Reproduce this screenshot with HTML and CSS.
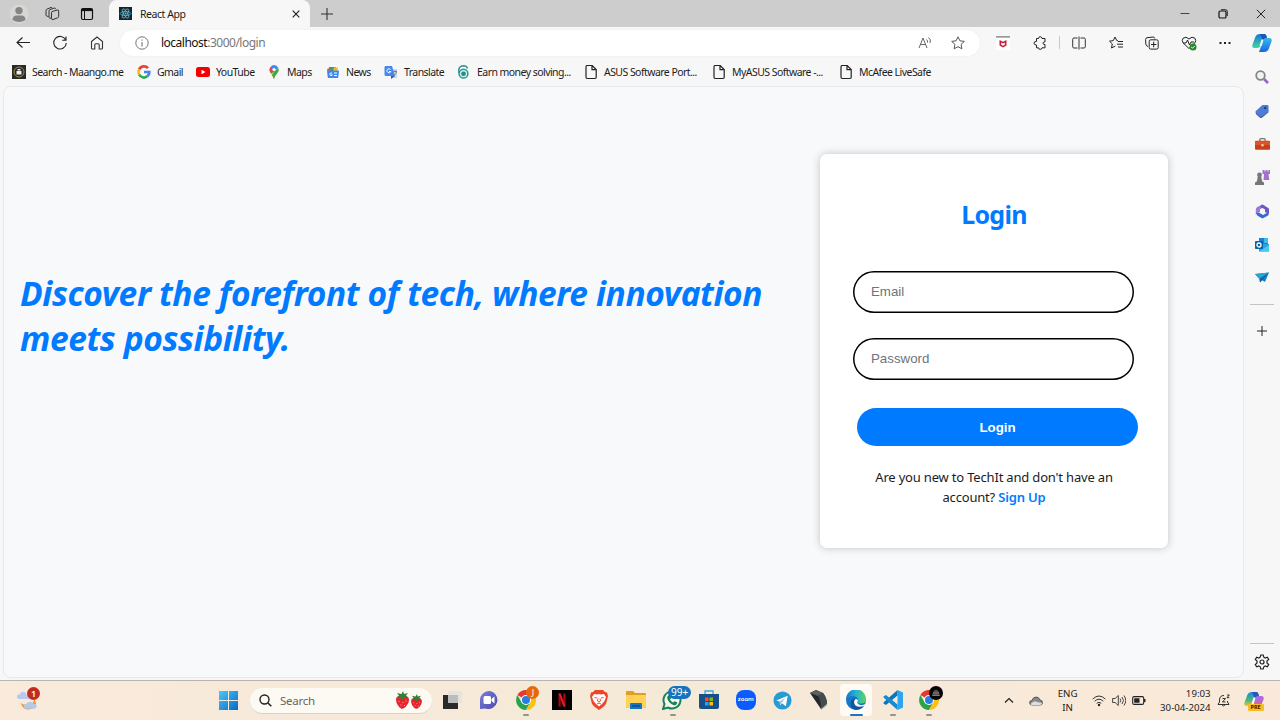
FILE: index.html
```html
<!DOCTYPE html>
<html lang="en">
<head>
<meta charset="utf-8">
<title>React App</title>
<link rel="stylesheet" href="styles.css">
</head>
<body>
<svg width="0" height="0" class="defs">
  <defs>
    <linearGradient id="win" x1="0" y1="0" x2="1" y2="1"><stop offset="0" stop-color="#4cc8f4"/><stop offset="1" stop-color="#0669c8"/></linearGradient>
    <linearGradient id="edge" x1="0" y1="0" x2="1" y2="0"><stop offset="0" stop-color="#1676c8"/><stop offset=".5" stop-color="#22b5d6"/><stop offset="1" stop-color="#63d453"/></linearGradient>
    <linearGradient id="cop1" x1="0" y1="0" x2="0" y2="1"><stop offset="0" stop-color="#1478d4"/><stop offset="1" stop-color="#43d6a0"/></linearGradient>
    <linearGradient id="cop2" x1="0" y1="0" x2="0" y2="1"><stop offset="0" stop-color="#35b9ee"/><stop offset="1" stop-color="#1668e0"/></linearGradient>
    <linearGradient id="pre1" x1="0" y1="0" x2="0" y2="1"><stop offset="0" stop-color="#1988e0"/><stop offset=".6" stop-color="#50b77a"/><stop offset="1" stop-color="#f2c72b"/></linearGradient>
    <linearGradient id="pre2" x1="0" y1="0" x2="0" y2="1"><stop offset="0" stop-color="#a66be8"/><stop offset="1" stop-color="#f0618b"/></linearGradient>
    <linearGradient id="violet" x1="0" y1="0" x2="1" y2="1"><stop offset="0" stop-color="#7a7edc"/><stop offset="1" stop-color="#4a4aae"/></linearGradient>
    <symbol id="file" viewBox="0 0 14 16"><path d="M2.2 1.500h6l4 4v7.800q0 1.200-1.200 1.200H3.200Q2 14.500 2 13.300V2.700q0-1.200 1.200-1.200M8 1.700v4h4" fill="none" stroke="#222" stroke-width="1.200"/></symbol>
    <symbol id="chrome" viewBox="0 0 20 20"><path d="M10 10 1.400 5A10 10 0 0 1 18.700 5H10z" fill="#e23a2e"/><path d="M10 10 5.700 12.500 1.400 5A10 10 0 0 0 10 20l4.300-7.500z" fill="#2ba24c"/><path d="M10 5h8.700A10 10 0 0 1 10 20l4.300-7.500z" fill="#fbc116"/><circle cx="10" cy="10" r="5" fill="#fff"/><circle cx="10" cy="10" r="4" fill="#2a7de1"/></symbol>
    <symbol id="berry" viewBox="0 0 15 18"><path d="M1 8Q2 4.500 7 4.500T14 8q.5 4-3 7.500-3 3-5 2Q1 14 1 8z" fill="#e5252f"/><path d="M8 0 6.500 3 2 2l2 2.500L1 7l4-.5 2 3 2-3 5 .5-3-2.500L13 2 9 3z" fill="#3a7b35"/><path d="M4 10v1M8 11v1M6 13.500v1M11 9.500v1M9.500 14v1" stroke="#ffb08f"/></symbol>
  </defs>
</svg>
<div class="screen">
  <header class="titlebar">
    <div class="window-tools">
      <svg class="avatar" viewBox="0 0 20 20"><circle cx="10" cy="10" r="9.500" fill="#d9d7d4"/><circle cx="10" cy="6.600" r="3.700" fill="#858585"/><path d="M3.500 16q0-4.500 4-4.500h5q4 0 4 4.500-6.500 4-13 0z" fill="#858585"/></svg>
      <svg class="i16" viewBox="0 0 16 16"><g fill="none" stroke="#333"><path d="M8 5.500 13.500 4q1.200-.2 1.200 1v5.500q0 1-1 1.300L9 13.500q-1.500.3-1.500-1V6.700q0-.9.500-1.200z"/><path d="M7 12.300 5.500 12Q5 12 5 11V5q0-1 1-1.400L10.500 2q1 0 1.500 1.200"/><path d="M4.500 10.500 2.500 10Q2 9.700 2 9V4.500q0-1 1-1.400L7 1.500q1-.2 1.500.8"/></g></svg>
      <svg class="i14" viewBox="0 0 14 14"><rect x="1.500" y="1.500" width="11" height="11" rx="1.500" fill="none" stroke="#111" stroke-width="1.200"/><path d="M1.500 3h11" stroke="#111" stroke-width="2.200"/><path d="M4.500 4v8" stroke="#111"/></svg>
    </div>
    <div class="tab">
      <svg class="i13" viewBox="0 0 13 13"><path d="M0 0h13v13H0z" fill="#17242d"/><g fill="none" stroke="#58bfd8" stroke-width=".8"><ellipse cx="6.500" cy="6.500" rx="5.300" ry="2"/><ellipse cx="6.500" cy="6.500" rx="5.300" ry="2" transform="rotate(60 6.500 6.500)"/><ellipse cx="6.500" cy="6.500" rx="5.300" ry="2" transform="rotate(120 6.500 6.500)"/></g><circle cx="6.500" cy="6.500" r="1" fill="#58bfd8"/></svg>
      <span class="tab-title">React App</span>
      <svg class="i8" viewBox="0 0 8 8"><path d="m.7.7 6.600 6.600m0-6.600L.7 7.300" stroke="#222" stroke-width="1.200"/></svg>
    </div>
    <svg class="new-tab" viewBox="0 0 12 12"><path d="M6 0v12M0 6h12" stroke="#333" stroke-width="1.100"/></svg>
    <div class="window-controls">
      <svg class="i10" viewBox="0 0 10 10"><path d="M.5 4.500h9" stroke="#444"/></svg>
      <svg class="i10" viewBox="0 0 10 10"><rect x="1" y="2" width="7" height="7" rx="1.300" fill="none" stroke="#111" stroke-width="1.200"/><path d="M3 .7h4.500q1.800 0 1.800 1.800V7" fill="none" stroke="#111" stroke-width=".9"/></svg>
      <svg class="i10" viewBox="0 0 10 10"><path d="m.8.8 8.400 8.400m0-8.400L.8 9.200" stroke="#222"/></svg>
    </div>
  </header>

  <nav class="toolbar">
    <div class="nav-buttons">
      <svg class="i16" viewBox="0 0 16 16"><path d="M15 7.500H2M7.500 2.500l-5.500 5 5.500 5" fill="none" stroke="#222" stroke-width="1.100"/></svg>
      <svg class="i16" viewBox="0 0 16 16"><path d="M13.700 5A6.300 6.300 0 1 0 14.300 8M14 1.500V5.200h-3.800" fill="none" stroke="#222" stroke-width="1.100"/></svg>
      <svg class="i16" viewBox="0 0 16 16"><path d="M2.500 6.500 8 2l5.500 4.500V13q0 1-1 1h-2.300V9.800q0-1-1-1H6.800q-1 0-1 1V14H3.500q-1 0-1-1z" fill="none" stroke="#333" stroke-width="1.100"/></svg>
    </div>
    <div class="address">
      <svg class="i14" viewBox="0 0 14 14"><circle cx="7" cy="7" r="6.200" fill="none" stroke="#666" stroke-width=".9"/><path d="M7 6v4.500M7 3.500v1.200" stroke="#666"/></svg>
      <span class="url"><b>localhost</b>:3000/login</span>
      <svg class="i14 read" viewBox="0 0 14 14"><path d="m1 12 4-10 4 10M2.500 8.500h5M8.500 3.500q1.500 1.200 1 3M10.500 1.500q3 2 1.500 5.500" fill="none" stroke="#666"/></svg>
      <svg class="i14" viewBox="0 0 14 14"><path d="m7 .8 1.900 4 4.400.6-3.200 3 .8 4.400L7 10.700l-3.900 2.100.8-4.400-3.200-3 4.400-.6z" fill="none" stroke="#555"/></svg>
    </div>
    <div class="extensions">
      <svg class="i14" viewBox="0 0 14 14"><path d="M0 1h14v13H0z" fill="#fff"/><path d="M0 0h14v1.700H0z" fill="#999"/><path d="M3.500 4 7 5.800 10.500 4v5.500L7 11.500 3.500 9.500z" fill="#c81f30"/><path d="M5.200 6.500 7 7.500l1.800-1V8.700L7 9.800 5.200 8.700z" fill="#fff"/></svg>
      <svg class="i14" viewBox="0 0 14 14"><path d="M3.500 2.500h2q0-1.800 1.700-1.800T9 2.500h3v3.300q-2 0-2 1.400t2 1.400v3.200H9q0 1.500-1.800 1.500T5.500 11.800h-2V9Q1 9 1 7.200t2.500-1.800z" fill="none" stroke="#222"/></svg>
    </div>
    <div class="actions">
      <svg class="i14" viewBox="0 0 14 14"><path d="M5.500 2H2Q.7 2 .7 3.300v7.400Q.7 12 2 12h3.500M8.500 2H12q1.300 0 1.300 1.300v7.400Q13.300 12 12 12H8.500M7 .5v13" fill="none" stroke="#333"/></svg>
      <svg class="i14" viewBox="0 0 14 14"><path d="M9 4.800 7.800 4.600 6 1 4.300 4.600.5 5.200l2.800 2.700L2.500 12l3.800-2M9 5.500h5M8 8.200h6M9 11h5" fill="none" stroke="#222"/></svg>
      <svg class="i14" viewBox="0 0 14 14"><path d="M3 10.500Q1 10 .8 8L.6 3.500Q.6 2 2 1.700L8 1q1.500 0 1.700 1.500" fill="none" stroke="#222"/><rect x="4.200" y="3.800" width="9" height="9.300" rx="1.500" fill="none" stroke="#222"/><path d="M8.700 5.700v5.600M6 8.500h5.400" stroke="#222"/></svg>
      <svg class="i16" viewBox="0 0 16 16"><path d="M8 13.500 2 7.800Q.5 5.500 2 3.300 5 .7 8 4q3-3.300 6-.7 1.500 2.200 0 4.500zM2 8h3l1.500-3 2 5L10 7h3" fill="none" stroke="#222"/><circle cx="12" cy="12" r="3.500" fill="#248a2a"/><path d="m10.200 12 1.300 1.200 2.300-2.300" fill="none" stroke="#fff"/></svg>
      <svg class="i14" viewBox="0 0 14 14"><path d="M1.500 6h2v2h-2zM6 6h2v2H6zM10.500 6h2v2h-2z" fill="#222"/></svg>
      <svg class="i20" viewBox="0 0 20 20"><path d="M8 1h5l-4 11Q8 15 5 15H3Q-.5 15 .5 11.500L3.300 4Q4.500 1 8 1z" fill="url(#cop1)"/><path d="M12 19H7l4-11Q12 5 15 5h2q3.500 0 2.500 3.500L16.700 16Q15.500 19 12 19z" fill="url(#cop2)"/><path d="M8 1h4.500q2 0 2.500 4-3 0-4 3z" fill="#1458b8"/><path d="M9.500 6.500h2L9.700 13H7.500z" fill="#e7fbff"/></svg>
    </div>
  </nav>

  <main class="browser-body">
    <div class="main-column">
      <div class="bookmarks">
        <div class="bm w125"><svg viewBox="0 0 14 14"><path d="M0 0h14v14H0z" fill="#292b2b"/><circle cx="7" cy="7" r="5" fill="none" stroke="#a7903b"/><path d="M4.500 6h5v3.500h-5zM5.500 4h3v1.500h-3z" fill="#eee"/></svg><span>Search - Maango.me</span></div>
        <div class="bm w59"><svg viewBox="0 0 14 14"><g fill="none" stroke-width="2.700"><path d="M2.200 4.500A5.300 5.300 0 0 1 11 3.200" stroke="#ea4335"/><path d="M2.200 4.500a5.300 5.300 0 0 0 0 5" stroke="#fbbc05"/><path d="M2.200 9.500a5.300 5.300 0 0 0 8.400 1.600" stroke="#34a853"/><path d="M7 7h5.300q0 2.500-1.700 4.100" stroke="#4285f4"/></g></svg><span>Gmail</span></div>
        <div class="bm w71"><svg viewBox="0 0 14 14"><rect y="2" width="14" height="10" rx="2.500" fill="#f40000"/><path d="m5.500 4.800 4 2.200-4 2.200z" fill="#fff"/></svg><span>YouTube</span></div>
        <div class="bm w59"><svg viewBox="0 0 14 14"><path d="M7 14Q6.500 11 4 8.500 2.500 7 2.500 4.500L7 4.500z" fill="#34a853"/><path d="M7 14q.5-3 3-5.500Q11.500 7 11.500 4.500L4 8.500Q6.500 11 7 14z" fill="#fbbc04"/><path d="M7 14q.5-3 3-5.500 2.500-3 1.200-5.700L7 7.500 5 10z" fill="#34a853"/><path d="M3.300 2.200Q5 0 7 0q3 0 4.200 2.800L7 7.500z" fill="#4285f4"/><path d="M2.500 4.500q0-1.500.8-2.300L7 5 4 8Q2.500 6 2.500 4.500z" fill="#ea4335"/><circle cx="7" cy="4.500" r="1.600" fill="#fff"/></svg><span>Maps</span></div>
        <div class="bm w58"><svg viewBox="0 0 14 14"><path d="M3 2h7v5H3z" fill="#32a564"/><path d="m8 2 4 1-1 4H7z" fill="#f6b62c"/><path d="m1 4 3-1 1 4H2z" fill="#e65145"/><path d="M1 5.500h12l-.7 6.500q0 1-1 1H2.700q-1 0-1-1z" fill="#3d85ef"/><path d="M6 8H4.500q-1.500 1 0 2.500H6V9M8 8h3M8 10.500h3" stroke="#fff" fill="none"/></svg><span>News</span></div>
        <div class="bm w73"><svg viewBox="0 0 14 14"><path d="M6 4h7v9H7z" fill="#cfd7e7"/><path d="M1.500 1H8l3 10H2q-1.500 0-1.500-1.500V2.500Q.5 1 1.500 1z" fill="#4687ef"/><path d="m7 14 4-3H7z" fill="#245bc0"/><path d="M6.500 4.500a2 2 0 1 0 .3 2H5" fill="none" stroke="#fff"/><path d="M9.500 6.500h3.500M11 5.500v1M12.500 7Q12 9 10.500 10" stroke="#667" fill="none" stroke-width=".8"/></svg><span>Translate</span></div>
        <div class="bm w127"><svg viewBox="0 0 14 14"><circle cx="6.500" cy="8.700" r="4.400" fill="#cfe9e6" stroke="#2b9993" stroke-width="1.500"/><path d="M1.800 8V4.500Q2.500 1 6.500.8q3.500.2 4 2.700" fill="none" stroke="#2b9993" stroke-width="1.500"/><circle cx="6.500" cy="8.700" r="2.300" fill="#218b87"/></svg><span>Earn money solving...</span></div>
        <div class="bm w128"><svg class="file"><use href="#file"/></svg><span>ASUS Software Port...</span></div>
        <div class="bm w127"><svg class="file"><use href="#file"/></svg><span>MyASUS Software -...</span></div>
        <div class="bm w127"><svg class="file"><use href="#file"/></svg><span>McAfee LiveSafe</span></div>
      </div>
      <section class="page">
        <h1 class="headline">Discover the forefront of tech, where innovation<br>meets possibility.</h1>
        <form class="card">
          <h2>Login</h2>
          <input type="email" placeholder="Email">
          <input type="password" placeholder="Password">
          <button type="button">Login</button>
          <p>Are you new to TechIt and don't have an<br>account? <a>Sign Up</a></p>
        </form>
      </section>
    </div>
    <aside class="sidebar">
      <div class="cell"><svg class="i14" viewBox="0 0 14 14"><circle cx="5.500" cy="5.500" r="4.300" fill="#eef4f5" stroke="#858585" stroke-width="1.800"/><path d="m9 9 4 4" stroke="#9467c5" stroke-width="2.600"/></svg></div>
      <div class="cell"><svg class="i14" viewBox="0 0 14 14"><path d="M7.500 1h4.700q1.300 0 1.300 1.300v4L7 12.700q-1 .8-2 0L.8 9q-.8-1 0-2z" fill="#4e7bd3"/><path d="m1 8.500 4 3.700q1 .8 2 0l6.500-6v2L7 13.700q-1 .6-2 0L.8 10z" fill="#3b61b5"/><circle cx="10.300" cy="4" r="1.200" fill="#164077"/></svg></div>
      <div class="cell"><svg class="i15" viewBox="0 0 14 14"><path d="M4.500 4V2.500q0-1 1-1h3q1 0 1 1V4" fill="none" stroke="#777" stroke-width="1.200"/><rect y="3.500" width="14" height="8.500" rx="1" fill="#c8401a"/><path d="M0 4h14v3.500H0z" fill="#df552a"/><path d="M6 6.700h2v2H6z" fill="#f5dfce"/></svg></div>
      <div class="cell"><svg class="i15" viewBox="0 0 15 15"><path d="M7.500 0h2v1.500h1V0h2v1.500h1V0H15v4h-1.500l.8 6H8.500L9 4H7.500z" fill="#a073ca"/><circle cx="4.500" cy="5" r="2.400" fill="#777"/><path d="M2.500 7h4v1.500l.8 3L9 12.500V15H0v-2.500l1.800-1 .7-3z" fill="#777"/></svg></div>
      <div class="cell"><svg class="i15" viewBox="0 0 15 15"><path d="M7 .5 2 3.300Q.8 4 .8 5.500v5L5 8V5.500L10.500 2z" fill="#9a7cd7"/><path d="m7 .5 5.500 3Q14 4.200 14 5.500V10l-4-2V5.500L5 3z" fill="#7055c6"/><path d="m.8 9 1.700 2.800L7.500 14.500l6-3.300V8L8 11 5 9z" fill="#386bd0"/><path d="m5 5.500 2.500-1.300L10 5.500V9l-2.500 1.300L5 9z" fill="#f7f7f7"/></svg></div>
      <div class="cell"><svg class="i14" viewBox="0 0 14 14"><path d="M4 0h9v9H4z" fill="#1683d6"/><path d="M9 0h4v5H9z" fill="#41b9ed"/><path d="M4 6h10v7.500H4z" fill="#28a3e0"/><path d="m4 13.500 10-6.500v6.500z" fill="#50c7ef"/><rect y="3" width="8" height="8" rx=".8" fill="#0763af"/><circle cx="4" cy="7" r="2" fill="none" stroke="#fff" stroke-width="1.300"/></svg></div>
      <div class="cell"><svg class="i14" viewBox="0 0 14 14"><path d="M0 3 14 1.500l-4 9.500-3.500-2L5 11.500 4 7.500z" fill="#1684c5"/><path d="M0 3 14 1.500l-10 6z" fill="#2ba3dc"/><path d="m14 1.500-9 10L5 8.500z" fill="#075e9e"/></svg></div>
      <hr>
      <svg class="side-plus" viewBox="0 0 10 10"><path d="M5 0v10M0 5h10" stroke="#222"/></svg>
      <hr class="bottom-line">
      <svg class="gear" viewBox="0 0 16 16"><path d="m6.800 1-.6 2.200-1.400.8-2.100-.7L1.300 5.500 3 7v2l-1.700 1.500 1.400 2.200 2.100-.7 1.400.8.6 2.200h2.400l.6-2.200 1.400-.8 2.100.7 1.400-2.200L13 9V7l1.700-1.500-1.400-2.200-2.100.7-1.400-.8L9.200 1z" fill="none" stroke="#222" stroke-width="1.200"/><circle cx="8" cy="8" r="2" fill="none" stroke="#222" stroke-width="1.200"/></svg>
    </aside>
  </main>

  <footer class="taskbar">
    <div class="weather"><svg viewBox="0 0 22 20"><path d="M18 7q0 6-5 7-5 1-9-2 2 7 8 7 6 0 8-6z" fill="#f2952f"/><path d="M3 8Q0 8 0 5.500T3 3q1-3 4.500-2.500Q10 1 10 4q3 0 3 2.500T11 8z" fill="#b8c8ef"/><path d="M10 18q-3 0-3-2.500t3-2.500q1-2.500 4-2.300T17.500 13q3 0 3 2.500T18 18z" fill="#b3c9e8"/></svg><span class="badge red">1</span></div>
    <svg class="start" viewBox="0 0 19 19"><path d="M0 0h9v9H0zM10 0h9v9h-9zM0 10h9v9H0zM10 10h9v9h-9z" fill="url(#win)"/></svg>
    <div class="search"><svg class="i13" viewBox="0 0 13 13"><circle cx="5.500" cy="5.500" r="4.500" fill="none" stroke="#222" stroke-width="1.400"/><path d="m9 9 3.300 3.300" stroke="#222" stroke-width="1.600"/></svg><span>Search</span><div class="berries"><svg class="b1"><use href="#berry"/></svg><svg class="b2"><use href="#berry"/></svg></div></div>
    <div class="apps">
      <div class="app"><svg class="i20" viewBox="0 0 20 20"><path d="M1 5h15v14H1z" fill="#292929"/><path d="M6 1h14v12H6z" fill="#e4e2df" opacity=".92"/><path d="M6 5h10v8H6z" fill="#bcbcbc"/></svg></div>
      <div class="app"><svg class="i20" viewBox="0 0 20 20"><path d="M10 1a9 9 0 1 1-3.500 17.500L1 19V10a9 9 0 0 1 9-9z" fill="url(#violet)"/><rect x="4.500" y="6" width="7.500" height="8" rx="1.500" fill="#fff"/><path d="m12.500 9 3-2.500v7l-3-2.500z" fill="#fff"/></svg></div>
      <div class="app run"><svg class="i20"><use href="#chrome"/></svg><span class="badge orange">J</span></div>
      <div class="app"><svg class="i20" viewBox="0 0 20 20"><path d="M0 0h20v20H0z"/><path d="M6.500 3.500h2.200v13H6.500zM11.300 3.500h2.200v13h-2.200z" fill="#a90711"/><path d="M6.500 3.500h2.300l4.700 13h-2.300z" fill="#e31b26"/></svg></div>
      <div class="app"><svg class="i20" viewBox="0 0 20 20"><path d="m6 0-2 2-2 .5L1 6l2 8q2 3 7 6 5-3 7-6l2-8-1-3.500L16 2l-2-2z" fill="#f0442a"/><path d="m5 4 3 .5L10 4l2 .5 3-.5 2 3-1.500 4-2.500 3-3 2.500L7 14l-2.500-3L3 7z" fill="#fff"/><path d="m5.500 7.500 2.500.5M14.500 7.500 12 8M9 8.500 8.500 11l1.500 1 1.500-1-.5-2.500M8 14l2-1 2 1" fill="none" stroke="#ef4930"/></svg></div>
      <div class="app"><svg class="i20" viewBox="0 0 20 20"><path d="M0 2q0-1 1-1h6l2 2h10q1 0 1 1v13q0 1-1 1H1q-1 0-1-1z" fill="#dea01e"/><path d="M0 5h20v12q0 1-1 1H1q-1 0-1-1z" fill="#ffd157"/><path d="M4 14q0-1 1-1h10q1 0 1 1v5H4z" fill="#1974c4"/><path d="M6 16h8" stroke="#0b4b8c" stroke-width="1.500"/></svg></div>
      <div class="app run"><svg class="i20" viewBox="0 0 20 20"><path d="m1 19 1.500-5a8.500 8.500 0 1 1 3.500 3.500z" fill="#f8f5ec" stroke="#168458" stroke-width="2"/><path d="M6 5.500 8 5l1.200 3L8 9.500q1 2 3 3l1.500-1.300 3 1.300q-1 3-3.500 2.700Q6 13 5.200 8 5.200 6.500 6 5.500z" fill="#168458"/></svg><span class="badge blue">99+</span></div>
      <div class="app"><svg class="i20" viewBox="0 0 20 20"><path d="M6 5V1h8v4" fill="none" stroke="#35a7df" stroke-width="1.300"/><path d="M0 4h20v13q0 2-2 2H2q-2 0-2-2z" fill="#174f88"/><path d="M6 7.500h3.500V11H6z" fill="#f25222"/><path d="M10.500 7.500H14V11h-3.500z" fill="#7fba23"/><path d="M6 12h3.500v3.500H6z" fill="#22a7ec"/><path d="M10.500 12H14v3.500h-3.500z" fill="#ffbd17"/></svg></div>
      <div class="app"><div class="zoom">zoom</div></div>
      <div class="app"><svg class="i19" viewBox="0 0 20 20"><circle cx="10" cy="10" r="9.500" fill="#289bd2"/><path d="m3.500 10 12-5-2 11-4-3-2 2-.5-4z" fill="#fff"/><path d="m7 11 6-4-4 5.500-1.500 2z" fill="#98c8e3"/></svg></div>
      <div class="app"><svg class="i20" viewBox="0 0 20 20"><path d="M1 3 7 0l7 3q4 5 4 11l-6 5z" fill="#25282b"/><path d="m1 3 6-3 7 3-5 3z" fill="#5a6062"/><path d="m9 6 5-3q4 5 4 11l-6 5q0-8-3-13z" fill="#444c50"/><path d="m12 19 6-5v1.500L12 20z" fill="#a6b1b2"/></svg></div>
      <div class="app active run"><svg class="i20" viewBox="0 0 20 20"><circle cx="10" cy="10" r="10" fill="#1678c9"/><path d="M0 9.500A10 10 0 0 1 20 9q0 4.500-5 4.500-3.800 0-3.200-2Q13 10 11.500 8 6 3.500 0 9.500z" fill="url(#edge)"/><path d="M5 17Q3 9 9 8.500q2.500 0 3 1.500-1 1-1 2 .5 3.500 6 3l2-.7Q16 20 10 20 7 20 5 17z" fill="#1255a0"/><path d="M9.500 9q3 0 2.300 2-1.300 2 1.200 3.500 3 1.500 6.500-.5L18.500 16Q9 18.500 8 12.500 8 10 9.500 9z" fill="#fffaf4"/></svg></div>
      <div class="app run"><svg class="i20" viewBox="0 0 20 20"><path d="M14.500 0 20 2.500v15L14.500 20z" fill="#2aa5ee"/><path d="M14.500 0v5.500L3 15 .5 13.500v-1z" fill="#0876bd"/><path d="M.5 6.500 3 5l11.500 9.500V20L.5 7.500z" fill="#168bd2"/></svg></div>
      <div class="app run"><svg class="i20"><use href="#chrome"/></svg><span class="badge black"><svg viewBox="0 0 14 14"><path d="M4 6q3-5 6 0l1 4H3z" fill="#555044"/><path d="M4 7h6M3.500 9.500h7" stroke="#9b8c7b" stroke-width=".7"/></svg></span></div>
    </div>
    <div class="tray">
      <svg class="i10 chev" viewBox="0 0 10 10"><path d="m1 6.500 4-4 4 4" fill="none" stroke="#222" stroke-width="1.200"/></svg>
      <svg class="cloud" viewBox="0 0 14 10"><path d="M3 9Q.6 9 .6 6.700T3 4.500Q4 1 7 1t4 3q2.500.3 2.500 2.700T11 9z" fill="#888" stroke="#444" stroke-width=".8"/><path d="M1.500 8q4-4 6.500-2l5 1q0 2-2 2H3q-1.500 0-1.500-1z" fill="#ddd"/></svg>
      <div class="lang">ENG<br>IN</div>
      <div class="status">
        <svg class="i14" viewBox="0 0 14 14"><path d="M.7 5q6.300-6 12.600 0M2.700 7.200q4.300-4 8.600 0M4.700 9.300q2.300-2 4.600 0" fill="none" stroke="#333"/><circle cx="7" cy="11" r="1.200" fill="#222"/></svg>
        <svg class="i14" viewBox="0 0 14 14"><path d="M.6 4.500h2.500L6.300 1.500v10L3.100 8.500H.6zM8 4.500q1.500 2 0 4M10 3q3 3.500 0 7M12 1.500q3.500 5 0 10" fill="none" stroke="#333" stroke-width=".9"/></svg>
        <svg class="i14" viewBox="0 0 14 14"><rect x=".7" y="2.600" width="11" height="7.800" rx="1.500" fill="none" stroke="#222" stroke-width="1.100"/><path d="M2.200 4.200h5.300v4.600H2.200zM12 5h1.500v3H12z" fill="#222"/></svg>
      </div>
      <div class="clock">19:03<br>30-04-2024</div>
      <svg class="i13 bell" viewBox="0 0 13 13"><path d="M7 1.500Q2.500 1.500 2.500 6v2L1 10.500h11L10.500 8V7M5 11q1.500 2 3 0M5.500 4.500h3l-3 3.500h3M10 1h2.300L10 3.700h2.300" fill="none" stroke="#333"/></svg>
      <div class="copilot"><svg class="i20" viewBox="0 0 20 20"><path d="M8 1h5l-4 11Q8 15 5 15H3Q-.5 15 .5 11.500L3.300 4Q4.500 1 8 1z" fill="url(#pre1)"/><path d="M12 19H7l4-11Q12 5 15 5h2q3.500 0 2.500 3.500L16.700 16Q15.500 19 12 19z" fill="url(#pre2)"/><path d="M8 1h4.500q2 0 2.500 4-3 0-4 3z" fill="#2456c6"/><path d="M9.500 6.500h2L9.700 13H7.500z" fill="#fff"/></svg><span>PRE</span></div>
    </div>
  </footer>
</div>
</body>
</html>
```

FILE: styles.css
```css
* { box-sizing: border-box; }
body { margin: 0; width: 1280px; height: 720px; overflow: hidden; font-family: "Noto Sans", "Open Sans", sans-serif; color: #1c1c1c; }
svg { display: block; flex: none; }
.defs { position: absolute; }
.screen { height: 720px; display: flex; flex-direction: column; background: #f7f7f7; }
.i8 { width: 8px; height: 8px; }
.i10 { width: 10px; height: 10px; }
.i13 { width: 13px; height: 13px; }
.i14 { width: 14px; height: 14px; }
.i15 { width: 15px; height: 15px; }
.i16 { width: 16px; height: 16px; }
.i19 { width: 19px; height: 19px; }
.i20 { width: 20px; height: 20px; }

.titlebar { height: 27px; flex: none; background: #cdcdcd; display: flex; align-items: center; }
.window-tools { width: 109px; display: flex; align-items: center; padding-left: 9px; gap: 15px; }
.avatar { width: 20px; height: 20px; }
.window-tools .i14 { margin-left: 5px; }
.tab { width: 201px; height: 27px; background: #f7f7f7; border-radius: 8px 8px 0 0; display: flex; align-items: center; padding: 0 10px; }
.tab-title { flex: 1; font-size: 10.500px; letter-spacing: -.45px; margin-left: 8px; }
.new-tab { width: 12px; height: 12px; margin-left: 11px; }
.window-controls { margin-left: auto; display: flex; gap: 28px; padding-right: 14px; }

.toolbar { height: 31px; flex: none; display: flex; align-items: center; }
.nav-buttons { width: 120px; flex: none; display: flex; gap: 21px; padding-left: 15px; }
.address { width: 860px; flex: none; height: 26px; border-radius: 13px; background: #fff; display: flex; align-items: center; padding: 0 15px; box-shadow: 0 0 2px #e8e8e8; }
.url { flex: 1; margin-left: 12px; font-size: 12px; letter-spacing: -.5px; color: #777; }
.url b { font-weight: 400; color: #111; }
.read { margin-right: 19px; }
.extensions { width: 80px; flex: none; height: 13px; border-right: 1px solid #c9c9c9; display: flex; gap: 23px; align-items: center; padding-left: 16px; }
.actions { margin-left: 1px; display: grid; grid-template-columns: repeat(6, 36.500px); justify-items: center; align-items: center; }

.browser-body { flex: none; height: 622px; display: flex; }
.main-column { width: 1244px; }
.bookmarks { height: 28px; padding-left: 12px; display: flex; align-items: center; font-size: 10.500px; letter-spacing: -.55px; }
.bm { display: flex; align-items: center; gap: 6px; flex: none; white-space: nowrap; }
.bm svg { width: 14px; height: 14px; }
.bm .file { width: 14px; height: 16px; }
.w58 { width: 58px; } .w59 { width: 59px; } .w71 { width: 71px; } .w73 { width: 73px; }
.w125 { width: 125px; } .w127 { width: 127px; } .w128 { width: 128px; }

.page { width: 1241px; height: 592px; margin-left: 3px; background: #f8f9fb; border: 1px solid #e7e9eb; border-radius: 8px; display: flex; align-items: flex-start; }
.headline { margin: 184px 0 0 16px; width: 800px; font: italic 700 33.500px/45px "Noto Sans", "Open Sans", sans-serif; letter-spacing: -.38px; color: #007bff; white-space: nowrap; }
.card { width: 348px; height: 394px; margin: 67px 0 0; padding: 0 33px; background: #fff; border-radius: 7px; box-shadow: 0 0 9px rgba(0,0,0,.22); display: flex; flex-direction: column; }
.card h2 { margin: 42px 0 39px; text-align: center; font-size: 25px; line-height: 36px; letter-spacing: -.7px; color: #007bff; }
.card input { width: 281px; height: 42px; flex: none; margin: 0 0 25px; border: 0; box-shadow: inset 0 0 0 1.500px #000; border-radius: 21px; padding: 0 18px 2px; background: #fff; font: 13.300px "Liberation Sans", Arial, sans-serif; }
.card input::placeholder { color: #6c757d; opacity: 1; }
.card button { width: 281px; height: 38px; flex: none; margin: 3px 0 0 4px; border: 0; border-radius: 19px; background: #007bff; color: #fff; font: 700 13.300px "Liberation Sans", Arial, sans-serif; }
.card p { margin: 21px 0 0; text-align: center; font-size: 13px; line-height: 20px; letter-spacing: -.18px; white-space: nowrap; }
.card a { color: #007bff; font-weight: 600; }

.sidebar { width: 36px; height: 620px; padding-top: 2.500px; display: flex; flex-direction: column; align-items: center; }
.cell { height: 33.500px; width: 36px; display: flex; align-items: center; justify-content: center; flex: none; }
.sidebar hr { width: 24px; height: 1px; flex: none; border: 0; margin: 8.500px 0 0; background: #c4c4c4; }
.side-plus { width: 10px; height: 10px; margin-top: 21px; }
.sidebar .bottom-line { margin-top: auto; }
.gear { width: 16px; height: 16px; margin: 10px 0 8px; }

.taskbar { height: 40px; flex: none; border-top: 1px solid #b9b4ae; background: linear-gradient(90deg, #f9eadb, #f5e9d8 50%, #fae9da); display: flex; align-items: center; }
.weather { position: relative; width: 219px; padding-left: 17px; }
.weather > svg { width: 21px; height: 20px; }
.start { width: 19px; height: 19px; }
.search { width: 182px; height: 26px; margin: 0 2px 0 12px; border-radius: 13px; background: #fdf9f3; border-bottom: 1px solid #ddd1c3; display: flex; align-items: center; padding: 0 9px; color: #666; font-size: 11.500px; }
.search span { margin-left: 8px; letter-spacing: -.25px; }
.berries { display: flex; align-items: flex-end; margin-left: auto; }
.b1 { width: 15px; height: 18px; }
.b2 { width: 13px; height: 15px; }
.apps { display: grid; grid-template-columns: repeat(14, 36.700px); height: 39px; }
.app { position: relative; display: flex; align-items: center; justify-content: center; }
.app > svg, .app > .zoom { margin-bottom: 1px; }
.run::after { content: ""; position: absolute; left: 15.500px; bottom: 4px; width: 6px; height: 2px; border-radius: 1px; background: #96918a; }
.active::before { content: ""; position: absolute; left: 2px; top: 3px; width: 32px; height: 32px; border-radius: 4px; background: #fffaf4; }
.active svg { position: relative; }
.active::after { left: 12px; width: 13px; background: #1774c7; }
.badge { position: absolute; border-radius: 7px; height: 13px; width: 13px; text-align: center; color: #fff; font-size: 9px; line-height: 13px; }
.red { left: 27px; top: -4px; background: #bf2c20; font-weight: 600; }
.orange { left: 19px; top: 5px; background: #e5690b; }
.blue { left: 14px; top: 5px; width: 23px; background: #1673bd; font-size: 10px; z-index: 1; }
.black { left: 18px; top: 5px; width: 14px; height: 14px; background: #050505; }
.zoom { width: 20px; height: 20px; border-radius: 8px; background: #0b5cff; color: #fff; font-size: 6px; font-weight: 600; line-height: 19px; text-align: center; }
.tray { flex: 1; display: flex; align-items: center; font-size: 9.700px; line-height: 14px; }
.chev { margin-left: 56px; }
.cloud { width: 14px; height: 10px; margin-left: 15px; }
.lang { width: 30px; margin-left: 10px; text-align: center; }
.status { display: flex; gap: 6px; margin-left: 9px; }
.clock { width: 60px; margin-left: 5px; text-align: right; white-space: nowrap; }
.bell { margin-left: 6px; }
.copilot { position: relative; margin-left: 14px; }
.copilot span { position: absolute; left: 4px; top: 13px; width: 16px; height: 7px; border-radius: 1px; background: #f7bd24; color: #332400; font-size: 5.500px; font-weight: 700; line-height: 7px; text-align: center; }
```
